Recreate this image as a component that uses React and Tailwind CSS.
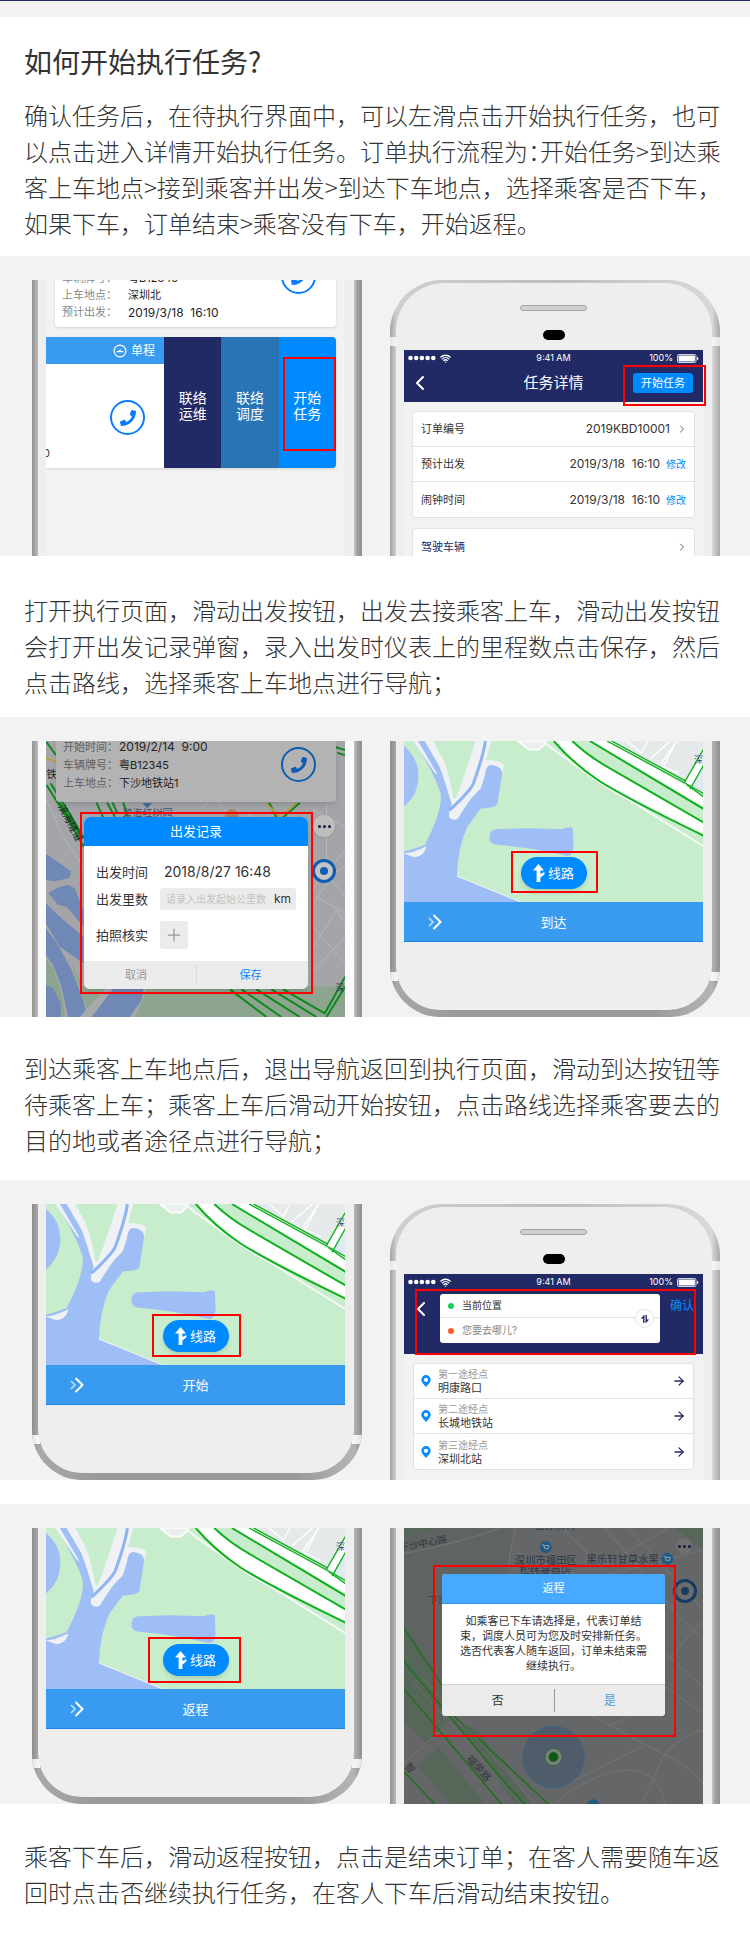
import React from 'react';
import { FaPhone } from 'react-icons/fa';
import { ArrowRight, ChevronLeft, ChevronRight, Plus, Wifi } from 'lucide-react';

function Highlight({ className }) {
  return <div aria-hidden="true" className={'pointer-events-none absolute z-20 border-2 border-[#ff0000] ' + className} />;
}

function Copy({ className, children }) {
  return (
    <p className={"pr-[26px] pl-6 text-[24px] leading-9 font-light text-[#333] [font-family:'Noto_Sans_CJK_SC',sans-serif] " + className}>
      {children}
    </p>
  );
}

function Band({ children, className = '' }) {
  return (
    <section className={'grid grid-cols-2 gap-7 bg-[#f2f2f2] pt-6 pr-[30px] pl-8 ' + className}>{children}</section>
  );
}

const shells = {
  middle:
    'bg-[linear-gradient(to_right,#929292_0,#bababa_6px,#c9c9c9_calc(100%-8px),#a2a2a2_calc(100%-5px),#8e8e8e_100%)]',
  top:
    'rounded-t-[52px] pt-[3px] bg-[linear-gradient(to_right,#a0a0a0_0,#cfcfcf_6px,#bdbdbd_50%,#d8d8d8_calc(100%-8px),#a8a8a8_100%)]',
  bottom:
    'rounded-b-[50px] pb-[7px] bg-[linear-gradient(to_right,#8c8c8c_0,#a8a8a8_6px,#9a9a9a_20%,#9a9a9a_80%,#b4b4b4_calc(100%-8px),#8e8e8e_100%)]',
};
const bodies = {
  middle: '',
  top: 'rounded-t-[48px]',
  bottom: 'rounded-b-[44px]',
};

function Phone({ part, light = false, children }) {
  return (
    <div className={'relative h-[276px] overflow-hidden pr-2 pl-[6px] ' + shells[part]}>
      {part === 'top' && <Antennas className="top-[57px]" />}
      {part === 'bottom' && <Antennas className="bottom-[36px]" />}
      <div
        className={
          'relative flex h-full flex-col pr-[9px] pl-2 ' + (light ? 'bg-[#fafafa] ' : 'bg-[#eeeeee] ') + bodies[part]
        }
      >
        {part === 'top' && (
          <div className="flex h-[67px] shrink-0 flex-col items-center pt-[22px]">
            <div className="h-[6px] w-[67px] rounded-full border border-[#a5a5a5] bg-[#cfcfcf]" />
            <div className="mt-[19px] h-[10px] w-[22px] rounded-full bg-black" />
          </div>
        )}
        {children}
      </div>
    </div>
  );
}

function Antennas({ className }) {
  return (
    <div className={'absolute inset-x-0 flex h-[9px] justify-between ' + className}>
      <div className="w-2 bg-[linear-gradient(to_right,#e6e6e6,#fafafa)]" />
      <div className="w-[10px] bg-[linear-gradient(to_right,#fafafa,#e6e6e6)]" />
    </div>
  );
}

function CallButton({ dim = false }) {
  return (
    <button
      type="button"
      aria-label="拨打电话"
      className={
        'flex size-[35px] shrink-0 items-center justify-center rounded-full border-2 ' +
        (dim ? 'border-[#0f5db3] text-[#0f5db3]' : 'border-[#0a7dff] bg-white text-[#0a7dff]')
      }
    >
      <FaPhone className="size-4" />
    </button>
  );
}

function StatusBar() {
  return (
    <div className="grid h-4 grid-cols-3 items-center px-1 text-[9px] leading-4 text-white">
      <div className="flex items-center gap-1">
        <svg viewBox="0 0 28 6" className="h-[6px] w-7" fill="currentColor" aria-hidden="true">
          <circle cx="2.5" cy="3" r="2.3" />
          <circle cx="8.2" cy="3" r="2.3" />
          <circle cx="13.9" cy="3" r="2.3" />
          <circle cx="19.6" cy="3" r="2.3" />
          <circle cx="25.3" cy="3" r="2.3" />
        </svg>
        <Wifi className="size-[11px]" strokeWidth={3} />
      </div>
      <div className="text-center">9:41 AM</div>
      <div className="flex items-center justify-end gap-1">
        100%
        <svg viewBox="0 0 22 9" className="h-[9px] w-[22px]" aria-hidden="true">
          <rect x="0.5" y="0.5" width="18.5" height="8" rx="1.5" fill="none" stroke="#fff" strokeWidth="0.8" />
          <rect x="1.6" y="1.6" width="16.3" height="5.8" rx="0.6" fill="#fff" />
          <path d="M20 3v3q1.4-.4 1.4-1.5T20 3z" fill="#fff" />
        </svg>
      </div>
    </div>
  );
}

function QueueScreen() {
  const rows = [
    ['车辆牌号：', '粤B12345', 'text-[11px]'],
    ['上车地点：', '深圳北', 'text-[11px]'],
    ['预计出发：', '2019/3/18  16:10', 'text-[12px]'],
  ];
  return (
    <div className="relative grow overflow-hidden bg-[#f2f2f2]">
      <div className="mx-[9px] -mt-[21px] flex items-start justify-between rounded bg-white pr-5 pb-[6px] pl-[7px] shadow-sm">
        <dl className="pt-[11px] text-[11px] leading-[17px]">
          {rows.map(([k, v, size]) => (
            <div key={k} className="flex">
              <dt className="w-[66px] text-[#888]">{k}</dt>
              <dd className={'leading-[17px] whitespace-pre text-[#222] ' + size}>{v}</dd>
            </div>
          ))}
        </dl>
        <CallButton />
      </div>
      <div className="mt-[10px] mr-[9px] flex h-[131px] overflow-hidden rounded-r text-white shadow-sm">
        <div className="flex w-[118px] flex-col bg-white">
          <div className="flex h-[27px] items-center justify-end gap-1 bg-[#399bef] pr-[9px] text-[12px] leading-4">
            <svg viewBox="0 0 14 14" className="size-[14px]" fill="none" stroke="#fff" strokeWidth="1.2" aria-hidden="true">
              <circle cx="7" cy="7" r="5.9" />
              <path d="M3.6 7.6h6.8" strokeWidth="1.1" />
              <path d="M4.6 7.4L7.6 5v2.4z" fill="#fff" stroke="none" />
            </svg>
            单程
          </div>
          <div className="relative flex grow items-start justify-end pt-9 pr-[19px]">
            <span className="absolute bottom-[7px] -left-[3px] text-[11px] leading-4 text-[#333]">0</span>
            <CallButton />
          </div>
        </div>
        <button type="button" className="grow basis-0 bg-[#212a65] pt-[6px] text-[14px] leading-4">联络<br />运维</button>
        <button type="button" className="grow basis-0 bg-[#2974b5] pt-[6px] text-[14px] leading-4">联络<br />调度</button>
        <button type="button" className="grow basis-0 bg-[#008aff] pt-[6px] text-[14px] leading-4">开始<br />任务</button>
      </div>
      <Highlight className="top-[77px] right-[9px] h-[94px] w-[53px]" />
    </div>
  );
}

function DetailRow({ label, value, edit = false }) {
  return (
    <div className="flex h-[35px] items-center justify-between border-b border-[#e2e2e2] px-2 last:border-b-0">
      <dt>{label}</dt>
      <dd className="flex items-center gap-[6px] text-[12px] leading-4 whitespace-pre">
        {value}
        {edit ? (
          <a href="#edit" className="text-[10px] leading-4 text-[#0a86ff]">修改</a>
        ) : (
          <ChevronRight className="-mr-[2px] size-3 text-[#5a6079]" strokeWidth={2} />
        )}
      </dd>
    </div>
  );
}

function DetailScreen() {
  return (
    <div className="relative grow bg-[#f2f2f2]">
      <header className="bg-[#212a65] pb-[2px]">
        <StatusBar />
        <div className="grid h-[34px] grid-cols-3 items-center px-[10px] text-white">
          <button type="button" aria-label="返回" className="-ml-[6px] justify-self-start">
            <ChevronLeft className="size-6" strokeWidth={2} />
          </button>
          <h2 className="text-center text-[15px] leading-5">任务详情</h2>
          <button type="button" className="h-5 w-[60px] justify-self-end rounded-[3px] bg-[#008aff] text-[11px] leading-5">
            开始任务
          </button>
        </div>
      </header>
      <div className="flex h-[154px] flex-col gap-[10px] overflow-hidden px-2 pt-[9px] text-[11px] leading-4 text-[#333]">
        <dl className="shrink-0 rounded border border-[#e2e2e2] bg-white">
          <DetailRow label="订单编号" value="2019KBD10001" />
          <DetailRow label="预计出发" value="2019/3/18  16:10" edit />
          <DetailRow label="闹钟时间" value="2019/3/18  16:10" edit />
        </dl>
        <dl className="shrink-0 rounded-t border border-b-0 border-[#e2e2e2] bg-white text-[#212a65]">
          <DetailRow label="驾驶车辆" />
        </dl>
      </div>
      <Highlight className="top-[15px] -right-[3px] h-[41px] w-[83px]" />
    </div>
  );
}

function CityMap() {
  return (
    <svg viewBox="138 93 898 828" preserveAspectRatio="xMidYMid slice" className="absolute inset-0 size-full" aria-hidden="true">
      <rect x="138" y="93" width="898" height="828" fill="#a3a5a9" />
      <g fill="none" stroke="#b5b7ba" strokeWidth="3">
        <path d="M140 270L190 380L250 470M190 300L330 480M330 280L370 93M600 300L640 260L700 330M740 310L850 380L940 430M830 330L900 400L1036 560M940 580L1000 490L1036 470M930 640L1036 760M935 720L1010 600L1036 640M925 800L1036 680M950 560L1036 610M980 93V500M1036 420L920 560M940 300L1036 350" />
      </g>
      <path d="M138 750L160 775L188 860L195 921H138Z" fill="#8da58f" />
      <path d="M215 760L251 830H1036V921H270Z" fill="#8da58f" />
      <g fill="#7088b6">
        <path d="M138 432L180 460L213 484L210 504L165 514L138 510Z" />
        <path d="M146 550Q170 530 205 525L225 535L251 600V650L200 590L175 585Z" />
        <path d="M138 580L185 625L251 680V760L180 710L138 640Z" />
        <path d="M138 655L175 705L215 780L250 870L262 921H205L185 830L160 765L138 735Z" />
        <path d="M138 825L160 835L183 880L183 921H138Z" />
      </g>
      <path d="M240 921L330 820H450L405 921Z" fill="#a7a9ad" />
      <path d="M275 921L345 830H432L425 870L390 921Z" fill="#7088b6" />
      <g fill="none" stroke="#0c8a1c" strokeWidth="6">
        <path d="M140 96L168 135M140 225L200 320L252 410M152 220L212 315L252 385M175 272L240 372M290 278L310 322M322 278L345 320M338 278L352 308M370 278L385 322" />
        <path d="M1008 112L1036 120M1012 128L1036 136M808 278L830 322M900 278L850 322" />
        <path d="M690 838L800 921M725 838L845 921M770 838L900 921M815 838L950 921M850 838L975 910L1036 800M980 921L1036 830" />
      </g>
      <path d="M138 145L170 155M800 280L840 322M890 278L835 330" fill="none" stroke="#c39a3a" strokeWidth="5" />
      <g fontSize="30" fill="#1d1f24">
        <text x="140" y="205">铁</text>
        <text transform="translate(174 290) rotate(62)">滨海隧道</text>
      </g>
      <path d="M428 280L442 295L456 280Z" fill="#3e6c96" />
      <text x="368" y="322" fontSize="30" fill="#3b4f74">碧海红树园</text>
      <circle cx="696" cy="318" r="20" fill="#a77f59" />
      <text x="1008" y="842" fontSize="26" fill="#2e3c66">深</text>
    </svg>
  );
}

function MoreButton({ className }) {
  return (
    <button type="button" aria-label="更多" className={'flex items-center justify-center gap-[2px] rounded-full ' + className}>
      <span className="size-[3px] rounded-full bg-[#17184a]" />
      <span className="size-[3px] rounded-full bg-[#17184a]" />
      <span className="size-[3px] rounded-full bg-[#17184a]" />
    </button>
  );
}

function LocateButton({ className }) {
  return (
    <button type="button" aria-label="定位" className={'flex size-6 items-center justify-center rounded-full border-[3px] ' + className}>
      <span className="size-2 rounded-full bg-current" />
    </button>
  );
}

function RecordScreen() {
  const rows = [
    ['开始时间：', '2019/2/14  9:00', 'text-[12px]'],
    ['车辆牌号：', '粤B12345', 'text-[11px]'],
    ['上车地点：', '下沙地铁站1', 'text-[11px]'],
  ];
  return (
    <div className="relative grow overflow-hidden">
      <CityMap />
      <div className="relative mr-[9px] ml-[10px] -mt-[3px] flex rounded-b bg-[#b3b3b3] pr-5 pb-[10px] pl-[7px] shadow-md">
        <dl className="grow text-[11px] leading-[18px]">
          {rows.map(([k, v, size]) => (
            <div key={k} className="flex">
              <dt className="w-14 text-[#606060]">{k}</dt>
              <dd className={'leading-[18px] whitespace-pre text-[#222] ' + size}>{v}</dd>
            </div>
          ))}
        </dl>
        <div className="pt-[9px]">
          <CallButton dim />
        </div>
      </div>
      <MoreButton className="absolute top-[74px] right-[10px] size-[22px] bg-[#bdbdbd] shadow" />
      <LocateButton className="absolute top-[118px] right-[9px] border-[#0f5db3] bg-[#c4c4c4] text-[#0f5db3]" />
      <form className="absolute top-[76px] left-[38px] w-56 overflow-hidden rounded-md bg-white text-[13px] leading-4 text-[#333] shadow-md" onSubmit={(e) => e.preventDefault()}>
        <h2 className="bg-[#008aff] text-center text-[13px] leading-[29px] text-white">出发记录</h2>
        <div className="grid grid-cols-[64px_1fr] items-center gap-y-2 px-3 pt-[18px] pb-3">
          <span>出发时间</span>
          <span className="pl-1 text-[14px] leading-4">2018/8/27 16:48</span>
          <label htmlFor="mileage">出发里数</label>
          <div className="flex h-[22px] items-center justify-between rounded-[3px] bg-[#ebebeb] pr-[5px] pl-[6px]">
            <input id="mileage" placeholder="请录入出发起始公里数" className="w-[102px] min-w-0 bg-transparent text-[10px] outline-none placeholder:text-[#c2c2c2]" />
            <span className="text-[12px]">km</span>
          </div>
          <span className="pt-[3px]">拍照核实</span>
          <button type="button" aria-label="添加照片" className="mt-[3px] flex size-7 items-center justify-center rounded-[3px] bg-[#ebebeb] text-[#999]">
            <Plus className="size-5" strokeWidth={1.5} />
          </button>
        </div>
        <div className="grid h-[28px] grid-cols-2 bg-[#ebebeb] text-[11px]">
          <button type="button" className="pr-2 text-[#999]">取消</button>
          <button type="submit" className="my-1 border-l border-[#dadada] pr-1 text-[#0a86ff]">保存</button>
        </div>
      </form>
      <Highlight className="top-[71px] left-[34px] h-[182px] w-[233px]" />
    </div>
  );
}

function ParkMap() {
  return (
    <svg viewBox="87 93 898 482" preserveAspectRatio="xMidYMid slice" className="absolute inset-0 size-full" aria-hidden="true">
      <rect x="87" y="93" width="898" height="482" fill="#c7edcc" />
      <path d="M87 106Q131 145 131 190Q135 250 87 290Z" fill="#9ebef5" />
      <path
        d="M118 93L160 93L215 195L232 280L226 325L260 305L310 240L325 180L345 165Q384 160 383 185L368 282Q364 292 318 295L278 350Q250 410 247 497L438 575H87V425L150 405Q205 300 198 250Q180 190 118 93Z"
        fill="#9ebef5"
      />
      <path d="M87 429Q112 430 156 408Q148 440 120 441Q104 436 87 429Z" fill="#eff1f4" />
      <path
        d="M150 93H350L334 149Q384 152 388 165L383 192Q382 168 350 165Q334 163 331 195L318 235L285 268L250 325Q236 334 224 322Q220 306 232 283L225 262Q212 215 195 170Z"
        fill="#eff1f4"
      />
      <path d="M116 93L130 93L190 195L180 187Z" fill="#eff1f4" />
      <path d="M176 93H303L262 215L245 262Q236 270 234 254Q226 200 207 150Z" fill="#c7edcc" />
      <path d="M332 93Q328 130 297 218Q290 240 225 300" fill="none" stroke="#8fb4f2" strokeWidth="9" />
      <path d="M347 368Q352 357 368 357L460 354L560 357Q590 346 594 356L596 410Q592 438 576 437Q480 414 362 403Q337 398 347 368Z" fill="#9ebef5" />
      <path d="M247 497L438 575" fill="none" stroke="#eff1f4" strokeWidth="3" />
      <path d="M430 93L462 119H492L515 98L508 93Z" fill="#eceff1" stroke="#fff" strokeWidth="5" />
      <path d="M508 96L535 118L640 192Q690 232 760 268L985 408" fill="none" stroke="#f4f7f5" strokeWidth="6" />
      <path d="M700 93L930 220L985 255V93Z" fill="#e5e9ea" />
      <path d="M950 230L985 165V255Z" fill="#dfeaf0" />
      <path d="M536 93Q600 165 680 215L985 376V337L660 145L592 93Z" fill="#fff" />
      <path d="M645 93L985 296V258L930 225L697 93Z" fill="#fff" />
      <path d="M928 215L985 118V165L945 235Z" fill="#fff" />
      <g fill="none" stroke="#fff" strokeWidth="4">
        <path d="M755 93L800 130L818 93M824 148L886 93M910 190L862 168L860 158L905 93M868 165L898 105" />
      </g>
      <g fill="none" stroke="#0eb01e" strokeWidth="6">
        <path d="M537 93Q592 158 672 212Q760 268 985 376" />
        <path d="M592 93Q640 138 700 172L985 337" />
        <path d="M645 93L985 296" />
        <path d="M696 93L928 218L985 250M710 93L932 213" strokeWidth="4" />
        <path d="M935 224L985 260" strokeWidth="4" />
        <path d="M928 217L985 118M945 237L985 166" strokeWidth="4" />
      </g>
      <text x="957" y="158" fontSize="27" fill="#3d5088">深</text>
    </svg>
  );
}

function RouteScreen({ action, highlight }) {
  return (
    <div className="relative">
      <div className="relative flex h-[161px] items-end justify-center overflow-hidden pb-[13px]">
        <ParkMap />
        <button
          type="button"
          className="relative flex h-8 w-[66px] items-center justify-center gap-[3px] rounded-full bg-[#008aff] text-[13px] leading-4 text-white shadow-md"
        >
          <svg viewBox="0 0 12 18" className="h-[18px] w-3" aria-hidden="true">
            <path d="M5.5 0L11 6.4H7.4V10L11.4 8V10.6L7.4 13.4V18H3.6V6.4H0Z" fill="#fff" />
          </svg>
          线路
        </button>
      </div>
      <button type="button" className="grid h-10 w-full grid-cols-3 items-center border-b border-[#1583e8] bg-[#399bef] text-[13px] leading-4 text-white">
        <svg viewBox="0 0 14 16" className="ml-6 h-4 w-[14px]" fill="none" stroke="#fff" aria-hidden="true">
          <path d="M1 4L5 8L1 12" strokeWidth="1.6" opacity="0.7" />
          <path d="M5.5 1L12.5 8L5.5 15" strokeWidth="2" />
        </svg>
        <span>{action}</span>
      </button>
      <Highlight className={highlight} />
    </div>
  );
}

function Pin() {
  return (
    <svg viewBox="0 0 10 12" className="h-3 w-[10px] shrink-0" aria-hidden="true">
      <path d="M5 0A4.7 4.7 0 0 0 .3 4.7C.3 7.6 3 9.4 5 12C7 9.4 9.7 7.6 9.7 4.7A4.7 4.7 0 0 0 5 0ZM5 2.7A2.1 2.1 0 1 1 5 6.9A2.1 2.1 0 0 1 5 2.7Z" fill="#0a8aff" fillRule="evenodd" />
    </svg>
  );
}

function StopsScreen() {
  const stops = [
    ['第一途经点', '明康路口'],
    ['第二途经点', '长城地铁站'],
    ['第三途经点', '深圳北站'],
  ];
  return (
    <div className="relative grow bg-[#f2f2f2]">
      <header className="h-20 bg-[#212a65]">
        <StatusBar />
        <div className="flex items-start pt-1 pl-[9px] text-white">
          <button type="button" aria-label="返回" className="w-[27px]">
            <ChevronLeft className="-ml-1 mt-[3px] size-6" strokeWidth={2} />
          </button>
          <div className="relative w-[220px] rounded-[3px] bg-white text-[10px]">
            <label className="flex h-6 items-center gap-2 border-b border-[#e4e4e4] pl-2">
              <span className="size-[6px] rounded-full bg-[#15d058]" />
              <input aria-label="起点" defaultValue="当前位置" className="w-36 bg-transparent text-[#333] outline-none" />
            </label>
            <label className="flex h-[25px] items-center gap-2 pl-2">
              <span className="size-[6px] rounded-full bg-[#ff5a2c]" />
              <input aria-label="终点" placeholder="您要去哪儿?" className="w-36 bg-transparent outline-none placeholder:text-[#888]" />
            </label>
            <button type="button" aria-label="交换" className="absolute top-[15px] right-[6px] flex size-[19px] items-center justify-center rounded-full border border-[#e4e4e4] bg-white">
              <svg viewBox="0 0 10 8" className="h-2 w-[10px]" fill="none" stroke="#212a65" strokeWidth="1.4" aria-hidden="true">
                <path d="M3.8 8V1.2L1.6 3.6M6.2 0V6.8L8.4 4.4" />
              </svg>
            </button>
          </div>
          <button type="button" className="ml-[10px] pt-1 text-[12px] leading-4 text-[#0a8aff]">确认</button>
        </div>
      </header>
      <ul className="mx-[9px] mt-[9px] rounded border border-[#e2e2e2] bg-white">
        {stops.map(([k, v]) => (
          <li key={k} className="flex h-[35px] items-center border-b border-[#e2e2e2] pr-[7px] pl-[7px] last:border-b-0">
            <Pin />
            <div className="ml-[7px] grow">
              <div className="text-[10px] leading-[14px] text-[#999]">{k}</div>
              <div className="text-[11px] leading-[14px] text-[#333]">{v}</div>
            </div>
            <ArrowRight className="size-[14px] text-[#212a65]" strokeWidth={2.2} />
          </li>
        ))}
      </ul>
      <Highlight className="top-[15px] left-[11px] h-[66px] w-[281px]" />
    </div>
  );
}

function NightMap() {
  return (
    <svg viewBox="87 84 898 828" preserveAspectRatio="xMidYMid slice" className="absolute inset-0 size-full" aria-hidden="true">
      <rect x="87" y="84" width="898" height="828" fill="#656667" />
      <path d="M87 84H420L400 200L360 560L330 620L200 640L87 490Z" fill="#5f6463" />
      <path d="M87 380L240 640L160 735L87 660ZM87 84H200L87 112ZM130 800L190 740L330 912H230ZM260 680L420 912H470L300 680ZM900 84H985V150Z" fill="#566659" />
      <g fill="none" stroke="#6e6f70" strokeWidth="5">
        <path d="M87 160Q250 130 380 84M420 84L400 200M430 160L640 240L985 150M560 84L680 200L880 84M690 84L900 330M760 84L985 330M620 240L985 560M860 300L985 420M880 480L985 360M870 560L985 640M640 640L860 760Q950 800 985 850M700 680L780 640M800 912L870 760Q930 700 985 690M560 860L800 740M87 790L200 690M540 912Q640 820 760 810Q850 810 870 912" />
      </g>
      <g fill="none" stroke="#246f22" strokeWidth="5">
        <path d="M87 384L204 560M87 484L400 860L450 912M87 566L380 912M230 640L520 912M87 815L180 912" />
      </g>
      <g fill="none" stroke="#6d6e6f" strokeWidth="3">
        <path d="M110 540L440 912M150 540L480 912" />
      </g>
      <g fill="#33373c" fontSize="29">
        <text transform="translate(76 154) rotate(-11)">下沙中心路</text>
        <text x="160" y="310">下沙村</text>
        <text transform="translate(272 778) rotate(48)" fontSize="31">福荣路</text>
        <text transform="translate(88 800) rotate(48)">智</text>
      </g>
      <g fill="#2c3947" fontSize="31">
        <text x="420" y="192">深圳市福田区</text>
        <text x="434" y="222">松纬晟商店</text>
        <text x="635" y="188">果乐轩甘草水果</text>
        <text x="478" y="86">密苏杨村</text>
      </g>
      <g fill="#235a80">
        <circle cx="513" cy="141" r="18" />
        <circle cx="877" cy="176" r="18" />
        <circle cx="655" cy="916" r="18" />
      </g>
      <g fill="none" stroke="#8aa0b0" strokeWidth="3">
        <path d="M502 134H506L510 146H520L523 137H508M866 169H870L874 181H884L887 172H872" />
      </g>
      <circle cx="536" cy="771" r="92" fill="#4f5d6b" stroke="#2e6590" strokeWidth="2.5" />
      <circle cx="536" cy="771" r="26" fill="#6e7a70" stroke="#24602a" strokeWidth="2" />
      <circle cx="536" cy="771" r="21" fill="none" stroke="#e1e8e1" strokeWidth="1" opacity="0.5" />
      <circle cx="536" cy="771" r="14" fill="#0c5a10" />
    </svg>
  );
}

function ReturnScreen() {
  return (
    <div className="relative grow overflow-hidden">
      <NightMap />
      <MoreButton className="absolute top-[10px] right-[11px] size-4 bg-[#707070]" />
      <LocateButton className="absolute top-[51px] right-[6px] border-[#173d66] bg-[#6c6c6c] text-[#173d66]" />
      <div role="dialog" aria-label="返程" className="absolute top-[46px] left-[38px] w-[223px] overflow-hidden rounded bg-white text-[#333]">
        <h2 className="border-b border-[#2f93e6] bg-[#47a9ff] text-center text-[11px] leading-[29px] text-white">返程</h2>
        <p className="px-4 py-[10px] text-center text-[11px] leading-[15px]">
          如乘客已下车请选择是，代表订单结束，调度人员可为您及时安排新任务。选否代表客人随车返回，订单未结束需继续执行。
        </p>
        <div className="grid h-8 grid-cols-2 border-t border-[#d5d5d5] bg-[#ebebeb] text-[12px]">
          <button type="button">否</button>
          <button type="button" className="my-1 border-l border-[#8d9aa5] text-[#47a0e0]">是</button>
        </div>
      </div>
      <Highlight className="top-[37px] left-[29px] h-[172px] w-[243px]" />
    </div>
  );
}

export default function App() {
  return (
    <main className="w-full bg-white [font-family:Inter,'Noto_Sans_CJK_SC',sans-serif]">
      <div className="h-[17px] border-t border-[#212a65] bg-[#f2f2f2]" />
      <h1 className="px-6 pt-6 text-[28px] leading-10 font-normal text-[#333] [font-family:'Noto_Sans_CJK_SC',sans-serif]">如何开始执行任务?</h1>
      <Copy className="pt-4 pb-[15px]">
        确认任务后，在待执行界面中，可以左滑点击开始执行任务，也可以点击进入详情开始执行任务。订单执行流程为<span className="[font-feature-settings:'halt']">：</span>开始任务&gt;到达乘客上车地点&gt;接到乘客并出发&gt;到达下车地点，选择乘客是否下车，如果下车，订单结束&gt;乘客没有下车，开始返程。
      </Copy>
      <Band>
        <Phone part="middle"><QueueScreen /></Phone>
        <Phone part="top"><DetailScreen /></Phone>
      </Band>
      <Copy className="pt-[36px] pb-[17px]">
        打开执行页面，滑动出发按钮，出发去接乘客上车，滑动出发按钮会打开出发记录弹窗，录入出发时仪表上的里程数点击保存，然后点击路线，选择乘客上车地点进行导航；
      </Copy>
      <Band>
        <Phone part="middle" light><RecordScreen /></Phone>
        <Phone part="bottom"><RouteScreen action="到达" highlight="top-[110px] left-[107px] h-[42px] w-[87px]" /></Phone>
      </Band>
      <Copy className="pt-[33px] pb-[22px]">
        到达乘客上车地点后，退出导航返回到执行页面，滑动到达按钮等待乘客上车；乘客上车后滑动开始按钮，点击路线选择乘客要去的目的地或者途径点进行导航；
      </Copy>
      <Band>
        <Phone part="bottom"><RouteScreen action="开始" highlight="top-[110px] left-[106px] h-[43px] w-[89px]" /></Phone>
        <Phone part="top"><StopsScreen /></Phone>
      </Band>
      <Band className="mt-6">
        <Phone part="bottom"><RouteScreen action="返程" highlight="top-[109px] left-[102px] h-[46px] w-[93px]" /></Phone>
        <Phone part="middle"><ReturnScreen /></Phone>
      </Band>
      <Copy className="pt-[34px] pb-[35px]">
        乘客下车后，滑动返程按钮，点击是结束订单；在客人需要随车返回时点击否继续执行任务，在客人下车后滑动结束按钮。
      </Copy>
    </main>
  );
}
